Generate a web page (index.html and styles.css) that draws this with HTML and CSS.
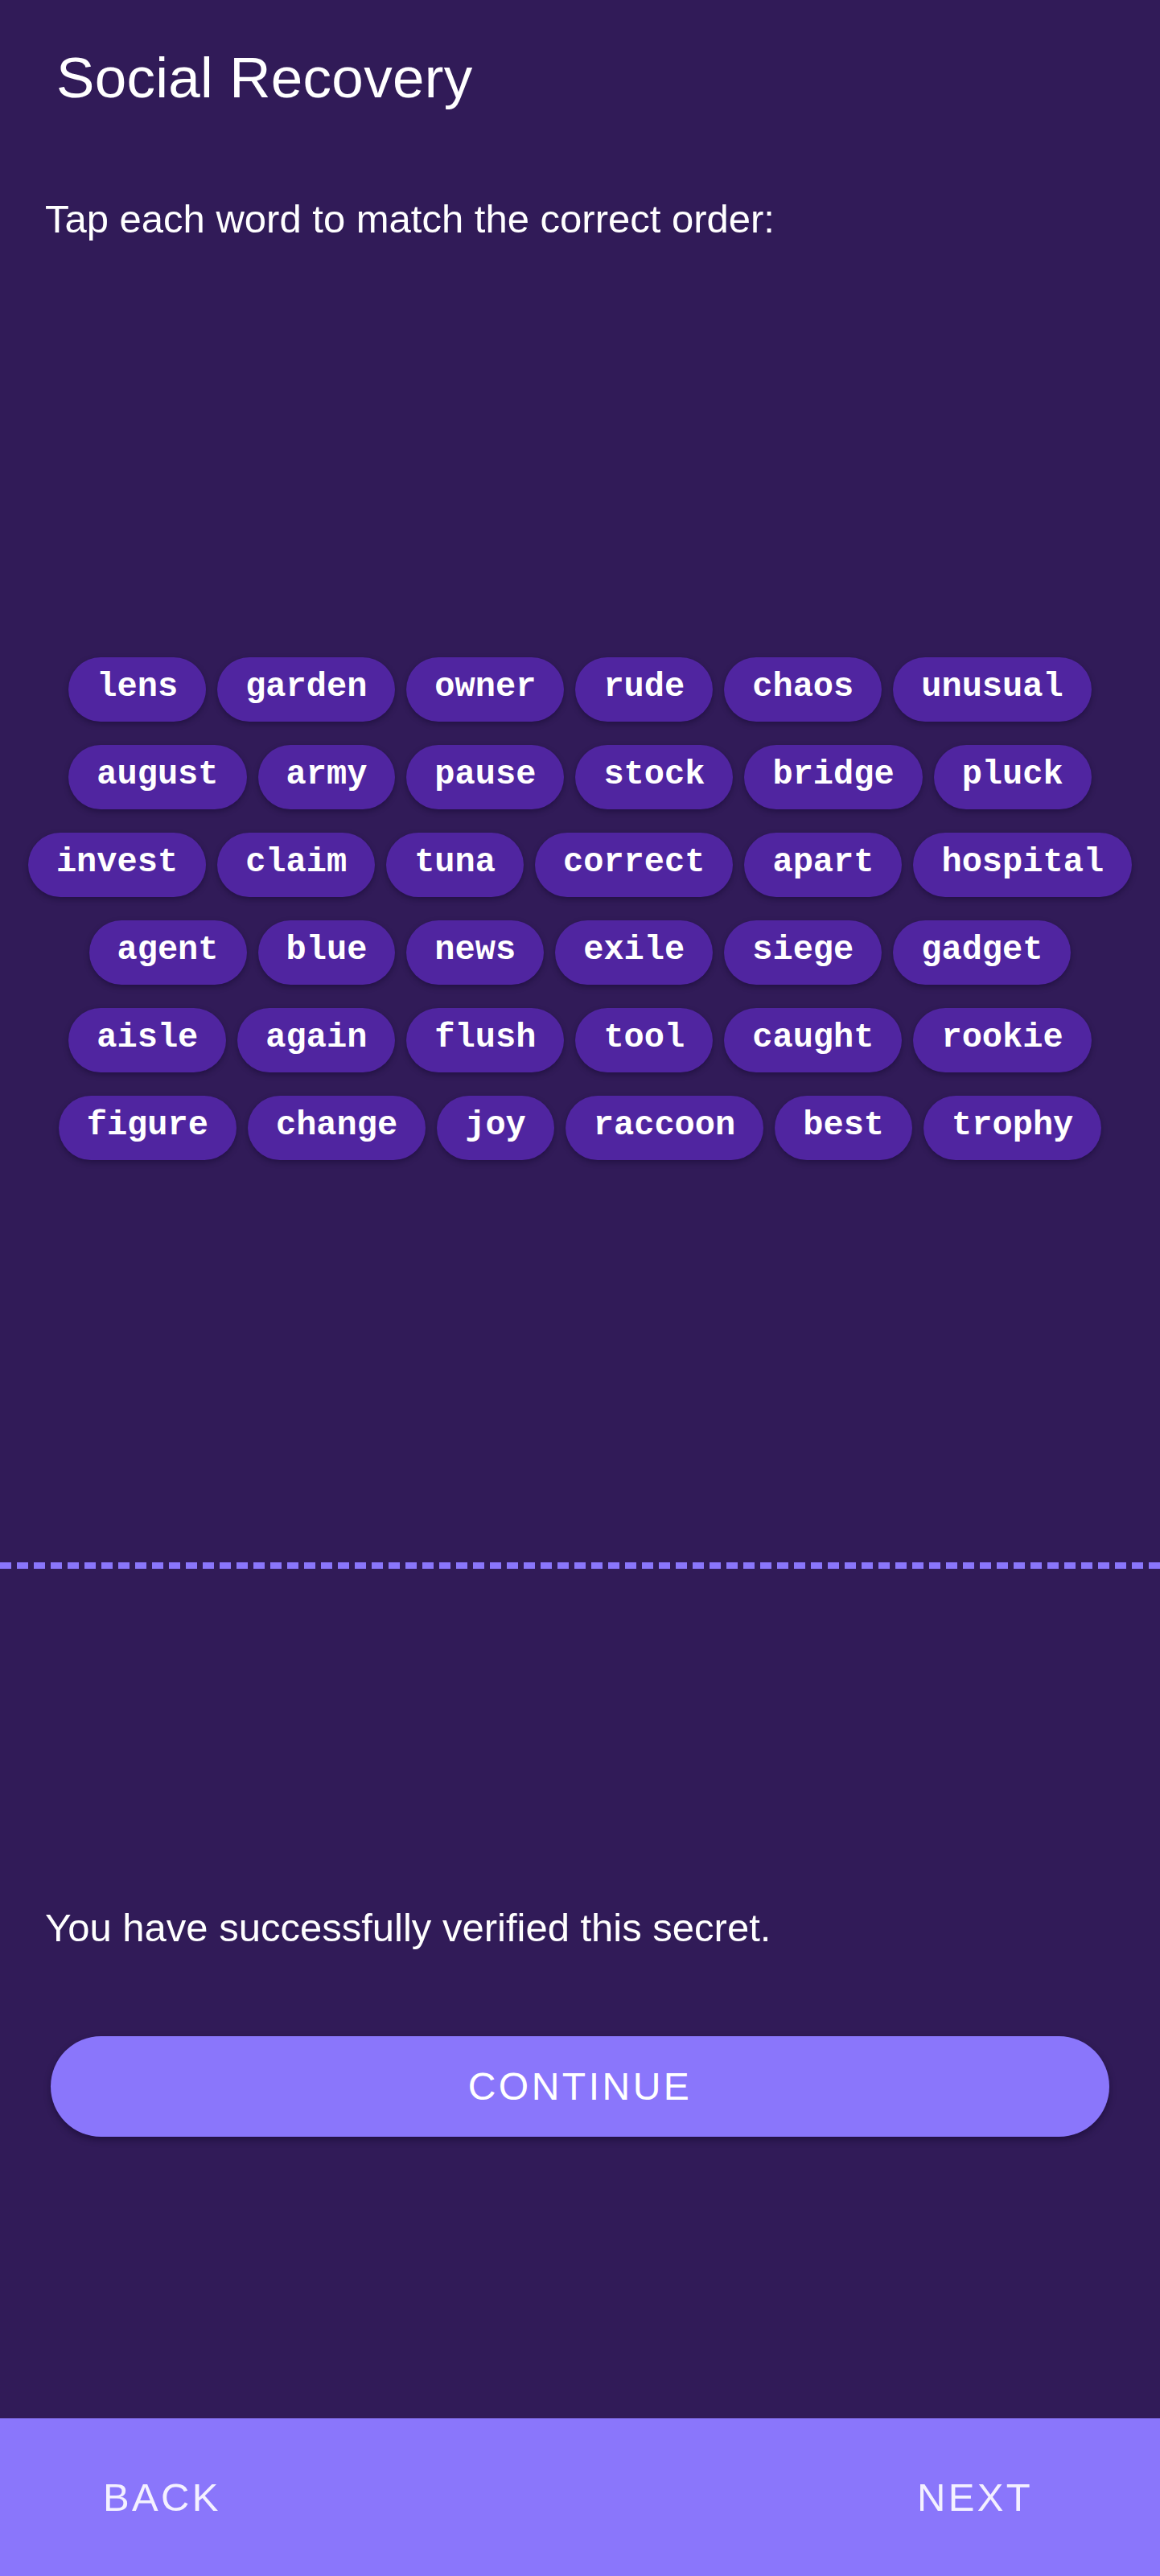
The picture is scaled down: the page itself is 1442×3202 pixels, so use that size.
FILE: index.html
```html
<!DOCTYPE html>
<html lang="en">
<head>
<meta charset="utf-8">
<title>Social Recovery</title>
<link rel="stylesheet" href="styles.css">
</head>
<body>
<div class="screen">
  <header class="header">
    <h1 class="title">Social Recovery</h1>
  </header>
  <p class="instruction">Tap each word to match the correct order:</p>
  <div class="words">
    <span class="chip">lens</span><span class="chip">garden</span><span class="chip">owner</span><span class="chip">rude</span><span class="chip">chaos</span><span class="chip">unusual</span>
    <span class="chip">august</span><span class="chip">army</span><span class="chip">pause</span><span class="chip">stock</span><span class="chip">bridge</span><span class="chip">pluck</span>
    <span class="chip">invest</span><span class="chip">claim</span><span class="chip">tuna</span><span class="chip">correct</span><span class="chip">apart</span><span class="chip">hospital</span>
    <span class="chip">agent</span><span class="chip">blue</span><span class="chip">news</span><span class="chip">exile</span><span class="chip">siege</span><span class="chip">gadget</span>
    <span class="chip">aisle</span><span class="chip">again</span><span class="chip">flush</span><span class="chip">tool</span><span class="chip">caught</span><span class="chip">rookie</span>
    <span class="chip">figure</span><span class="chip">change</span><span class="chip">joy</span><span class="chip">raccoon</span><span class="chip">best</span><span class="chip">trophy</span>
  </div>
  <div class="divider"></div>
  <p class="status">You have successfully verified this secret.</p>
  <div class="actions">
    <button class="continue">CONTINUE</button>
  </div>
  <nav class="bottom-bar">
    <button class="nav-btn">BACK</button>
    <button class="nav-btn">NEXT</button>
  </nav>
</div>
</body>
</html>
```

FILE: styles.css
```css
* {
  box-sizing: border-box;
}

html, body {
  margin: 0;
  padding: 0;
  background: #311b58;
}

body {
  font-family: "Liberation Sans", Arial, sans-serif;
  color: #ffffff;
}

.screen {
  width: 1442px;
  height: 3202px;
  display: flex;
  flex-direction: column;
  background: #311b58;
}

.header {
  padding: 56px 0 0 70px;
}

.title {
  margin: 0;
  font-size: 71px;
  line-height: 82px;
  font-weight: 400;
  letter-spacing: 0.3px;
}

.instruction {
  margin: 105px 0 0 56px;
  font-size: 49px;
  line-height: 58px;
}

.words {
  margin: 516px 16px 0;
  display: flex;
  flex-wrap: wrap;
  justify-content: center;
  gap: 29px 14px;
}

.chip {
  height: 80px;
  padding: 0 35px 5px;
  display: flex;
  align-items: center;
  border-radius: 40px;
  background: #5025a0;
  box-shadow: 0 3px 7px rgba(10, 0, 30, 0.35);
  font-family: "Liberation Mono", "DejaVu Sans Mono", monospace;
  font-weight: 700;
  font-size: 42px;
  line-height: 49px;
  color: #ffffff;
}

.divider {
  margin-top: 500px;
  height: 8px;
  background: repeating-linear-gradient(to right, #8a76fb 0 14px, transparent 14px 21px);
}

.status {
  margin: 417px 0 0 56px;
  font-size: 49px;
  line-height: 58px;
}

.actions {
  margin-top: 106px;
  padding: 0 63px;
}

.continue {
  width: 100%;
  height: 125px;
  border: none;
  border-radius: 63px;
  background: #8a76fb;
  box-shadow: 0 4px 8px rgba(10, 0, 30, 0.4);
  color: #ffffff;
  font-family: "Liberation Sans", Arial, sans-serif;
  font-size: 48px;
  letter-spacing: 3.5px;
  font-weight: 400;
  padding: 0;
}

.bottom-bar {
  margin-top: auto;
  height: 196px;
  background: #8a76fb;
  display: flex;
  align-items: center;
  justify-content: space-between;
  padding: 0 158px 0 128px;
}

.nav-btn {
  border: none;
  background: transparent;
  padding: 0;
  color: #f4f1ff;
  font-family: "Liberation Sans", Arial, sans-serif;
  font-size: 49px;
  letter-spacing: 3.3px;
  font-weight: 400;
  line-height: 58px;
}
```
